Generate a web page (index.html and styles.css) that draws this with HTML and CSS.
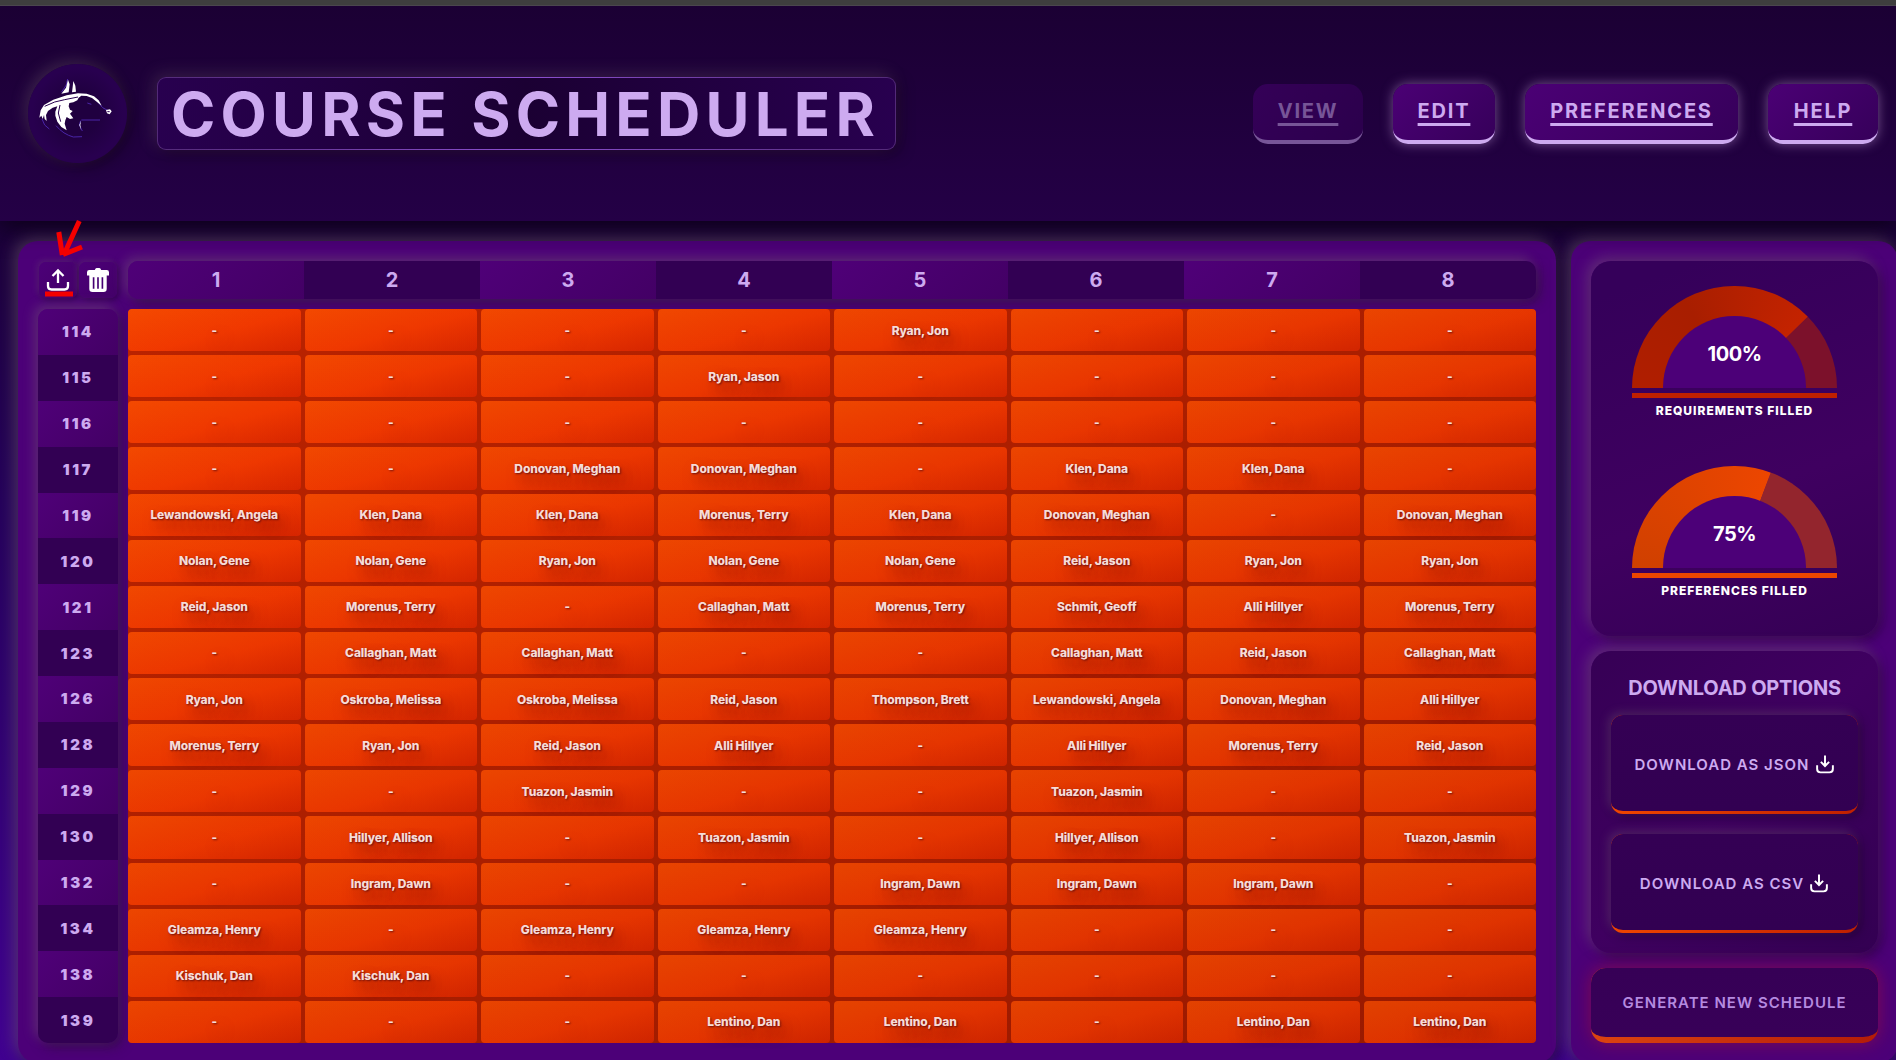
FILE: index.html
```html
<!DOCTYPE html>
<html lang="en">
<head>
<meta charset="utf-8">
<title>Course Scheduler</title>
<link rel="stylesheet" href="styles.css">
</head>
<body>
<header class="header">
  <div class="logo">
    <svg viewBox="24 41 297 297">
      <g fill="none" stroke="#4a25a8" stroke-width="3">
        <path d="M66 206L74 224L88 236"/><path d="M108 226Q130 252 160 260L186 259"/><path d="M182 211L178 224L187 242"/><path d="M184 209H240"/><path d="M234 156L248 172L266 182"/><path d="M143 86L139 104L124 126"/><path d="M202 158L214 162"/>
      </g>
      <g fill="#fff">
        <path d="M144 88L149 102L146 126L124 130L138 112Z"/><path d="M160 92L166 106L168 124L156 126L158 110Z"/>
        <path d="M62 180L72 164L100 148L140 135L174 129L200 130L222 138L236 150L245 166L232 156L216 143L200 137L184 136L176 142L172 150L160 156L148 158L146 168L150 178L158 182L150 190L160 204L150 206L140 200L136 210L134 220L140 240L124 230L112 214L106 196L106 184L112 168L98 172L84 182L78 194L80 212L74 206L72 194L68 206L64 196L58 202Z"/>
        <path d="M258 179L270 177L275 183L269 192L261 189Z"/><path d="M183 211L178 224L183 238L181 224Z"/>
      </g>
      <g fill="none" stroke="#28004f" stroke-width="3">
        <path d="M74 168Q104 152 134 148L174 140"/><path d="M120 164L115 188L122 214"/><path d="M262 184H269"/>
      </g>
    </svg>
  </div>
  <h1 class="title">COURSE SCHEDULER</h1>
  <nav class="nav">
    <a class="nav-link current">VIEW</a>
    <a class="nav-link edit">EDIT</a>
    <a class="nav-link preferences">PREFERENCES</a>
    <a class="nav-link">HELP</a>
  </nav>
</header>
<main class="main">
  <section class="panel schedule">
    <div class="tools">
      <button class="tool"><svg viewBox="0 0 24 24"><path d="M12 16V3.500M6.500 9L12 3.500 17.500 9M2 15v4q0 3.500 3.500 3.500h13q3.500 0 3.500-3.500v-4" fill="none" stroke="#fff" stroke-width="2.300"/></svg></button>
      <button class="tool trash"><svg viewBox="0 0 24 26"><path fill="#fff" d="M8.500 2q.8-2 2-2h3q1.200 0 2 2h6q2.500 0 2.500 2.500V8h-2.500v14.500q0 3.500-3.500 3.500H6q-3.500 0-3.500-3.500V8H0V4.500Q0 2 2.500 2z"/><path d="M7.200 10v12.500M12 10v12.500M16.800 10v12.500" stroke="#460073" stroke-width="1.800"/></svg></button>
    </div>
    <div class="periods"><span>1</span><span>2</span><span>3</span><span>4</span><span>5</span><span>6</span><span>7</span><span>8</span></div>
    <div class="rooms"><span>114</span><span>115</span><span>116</span><span>117</span><span>119</span><span>120</span><span>121</span><span>123</span><span>126</span><span>128</span><span>129</span><span>130</span><span>132</span><span>134</span><span>138</span><span>139</span></div>
    <div class="grid">
      <div>-</div><div>-</div><div>-</div><div>-</div><div>Ryan, Jon</div><div>-</div><div>-</div><div>-</div>
      <div>-</div><div>-</div><div>-</div><div>Ryan, Jason</div><div>-</div><div>-</div><div>-</div><div>-</div>
      <div>-</div><div>-</div><div>-</div><div>-</div><div>-</div><div>-</div><div>-</div><div>-</div>
      <div>-</div><div>-</div><div>Donovan, Meghan</div><div>Donovan, Meghan</div><div>-</div><div>Klen, Dana</div><div>Klen, Dana</div><div>-</div>
      <div>Lewandowski, Angela</div><div>Klen, Dana</div><div>Klen, Dana</div><div>Morenus, Terry</div><div>Klen, Dana</div><div>Donovan, Meghan</div><div>-</div><div>Donovan, Meghan</div>
      <div>Nolan, Gene</div><div>Nolan, Gene</div><div>Ryan, Jon</div><div>Nolan, Gene</div><div>Nolan, Gene</div><div>Reid, Jason</div><div>Ryan, Jon</div><div>Ryan, Jon</div>
      <div>Reid, Jason</div><div>Morenus, Terry</div><div>-</div><div>Callaghan, Matt</div><div>Morenus, Terry</div><div>Schmit, Geoff</div><div>Alli Hillyer</div><div>Morenus, Terry</div>
      <div>-</div><div>Callaghan, Matt</div><div>Callaghan, Matt</div><div>-</div><div>-</div><div>Callaghan, Matt</div><div>Reid, Jason</div><div>Callaghan, Matt</div>
      <div>Ryan, Jon</div><div>Oskroba, Melissa</div><div>Oskroba, Melissa</div><div>Reid, Jason</div><div>Thompson, Brett</div><div>Lewandowski, Angela</div><div>Donovan, Meghan</div><div>Alli Hillyer</div>
      <div>Morenus, Terry</div><div>Ryan, Jon</div><div>Reid, Jason</div><div>Alli Hillyer</div><div>-</div><div>Alli Hillyer</div><div>Morenus, Terry</div><div>Reid, Jason</div>
      <div>-</div><div>-</div><div>Tuazon, Jasmin</div><div>-</div><div>-</div><div>Tuazon, Jasmin</div><div>-</div><div>-</div>
      <div>-</div><div>Hillyer, Allison</div><div>-</div><div>Tuazon, Jasmin</div><div>-</div><div>Hillyer, Allison</div><div>-</div><div>Tuazon, Jasmin</div>
      <div>-</div><div>Ingram, Dawn</div><div>-</div><div>-</div><div>Ingram, Dawn</div><div>Ingram, Dawn</div><div>Ingram, Dawn</div><div>-</div>
      <div>Gleamza, Henry</div><div>-</div><div>Gleamza, Henry</div><div>Gleamza, Henry</div><div>Gleamza, Henry</div><div>-</div><div>-</div><div>-</div>
      <div>Kischuk, Dan</div><div>Kischuk, Dan</div><div>-</div><div>-</div><div>-</div><div>-</div><div>-</div><div>-</div>
      <div>-</div><div>-</div><div>-</div><div>Lentino, Dan</div><div>Lentino, Dan</div><div>-</div><div>Lentino, Dan</div><div>Lentino, Dan</div>
    </div>
  </section>
  <aside class="panel side">
    <div class="card gauges">
      <div class="gauge red"><div class="arc"><div class="hole">100%</div></div><div class="label">REQUIREMENTS FILLED</div></div>
      <div class="gauge orange"><div class="arc"><div class="hole">75%</div></div><div class="label">PREFERENCES FILLED</div></div>
    </div>
    <div class="card downloads">
      <h2>DOWNLOAD OPTIONS</h2>
      <button class="download"><span>DOWNLOAD AS JSON</span><svg viewBox="0 0 24 24"><path d="M12 0v13.500M6.500 8.500L12 14l5.500-5.500M1.500 13v5q0 4.500 4.500 4.500h12q4.500 0 4.500-4.500v-5" fill="none" stroke="#fff" stroke-width="2.600"/></svg></button>
      <button class="download"><span>DOWNLOAD AS CSV</span><svg viewBox="0 0 24 24"><path d="M12 0v13.500M6.500 8.500L12 14l5.500-5.500M1.500 13v5q0 4.500 4.500 4.500h12q4.500 0 4.500-4.500v-5" fill="none" stroke="#fff" stroke-width="2.600"/></svg></button>
    </div>
    <button class="generate">GENERATE NEW SCHEDULE</button>
  </aside>
</main>
<svg class="annotation" viewBox="0 0 60 90"><path d="M49.300 11L34 44.500M28.800 22l3.500 23M52 37L33 44.500" fill="none" stroke="#f50000" stroke-width="5"/><path d="M15 81.500h28v5H15z" fill="#f50000"/></svg>
</body>
</html>
```
FILE: styles.css
```css
* { box-sizing: border-box; }
html, body { height: 100%; margin: 0; overflow: hidden; }
body {
  font-family: Inter, "Liberation Sans", sans-serif;
  color: #cdaaf0;
  background: linear-gradient(180deg, #1b0038 220px, #24005a 500px, #400090 1060px);
}
button { font: inherit; color: inherit; border: 0; margin: 0; padding: 0; }
.header {
  position: relative;
  z-index: 1;
  height: 221px;
  padding: 6px 18px 0 28px;
  display: flex;
  align-items: center;
  background: linear-gradient(#3e3e3e 5px, #4a464e 5px, #4a464e 6px, transparent 6px), linear-gradient(180deg, #1b0033, #240046);
  box-shadow: 0 5px 22px #0c0018;
}
.logo {
  width: 99px;
  height: 99px;
  margin: 0 30px 0 0;
  border-radius: 50%;
  background: radial-gradient(#200040 30%, #28004f 65%);
  box-shadow: -4px -4px 14px rgba(140, 120, 130, .25), 4px 4px 14px rgba(15, 0, 20, .6);
}
.logo svg { display: block; width: 99px; height: 99px; }
.title {
  margin: 0;
  width: 739px;
  height: 73px;
  padding-left: 13px;
  border: 1px solid transparent;
  border-radius: 9px;
  font-size: 60px;
  line-height: 73px;
  font-weight: 700;
  letter-spacing: 5.2px;
  white-space: nowrap;
  background: linear-gradient(90deg, #28004f, #1b0033 50%, #28004f) padding-box, linear-gradient(90deg, #532a78, #8b4fd0 50%, #532a78) border-box;
  box-shadow: -4px -4px 16px rgba(140, 120, 130, .22), 4px 4px 14px rgba(15, 0, 20, .5);
}
.nav { margin-left: auto; display: flex; gap: 30px; }
.nav-link {
  width: 110px;
  height: 60px;
  border-radius: 15px;
  border-bottom: 4px solid #cdaaf0;
  font-size: 20px;
  line-height: 54px;
  font-weight: 650;
  letter-spacing: 1.8px;
  text-align: center;
  text-decoration: underline 3px;
  text-underline-offset: 5px;
  background: linear-gradient(135deg, #4b0075, #36005a);
  box-shadow: 0 0 12px rgba(190, 150, 210, .55);
}
.nav-link.edit { width: 102px; }
.nav-link.preferences { width: 213px; }
.nav-link.current { opacity: .5; box-shadow: none; }
.main {
  width: 1880px;
  height: 822px;
  margin: 20px 0 0 18px;
  display: flex;
  gap: 15px;
}
.panel {
  padding: 20px;
  border-radius: 20px;
  background: #4c0078;
  box-shadow: -4px -4px 16px rgba(140, 120, 130, .4), 4px 4px 16px rgba(20, 0, 30, .6);
}
.schedule {
  width: 1538px;
  display: grid;
  grid-template: 38px 734px / 80px 1408px;
  gap: 10px;
}
.tools { display: flex; gap: 2px; padding: 1px 0 1px 1px; }
.tool {
  width: 38px;
  display: flex;
  align-items: center;
  justify-content: center;
  border-radius: 7px;
  background: linear-gradient(135deg, #4c0078, #430068);
  box-shadow: -2px -2px 6px rgba(140, 120, 130, .2), 2px 2px 6px rgba(20, 0, 30, .45);
}
.tool svg { width: 24px; height: 24px; margin-bottom: 2px; }
.trash svg { width: 22px; margin-bottom: 1px; }
.periods, .rooms {
  display: flex;
  border-radius: 10px;
  box-shadow: -4px -4px 12px rgba(140, 120, 130, .32), 4px 4px 12px rgba(40, 20, 50, .6);
}
.rooms { flex-direction: column; }
.periods span, .rooms span {
  flex: 1;
  display: flex;
  align-items: center;
  justify-content: center;
  background: linear-gradient(135deg, #4f0078, #430065);
}
.periods span:nth-child(even), .rooms span:nth-child(even) { background: #320053; }
.periods span { font-size: 20px; font-weight: 700; }
.rooms span { font-size: 15px; font-weight: 900; letter-spacing: 2.6px; }
.periods span:first-child { border-radius: 10px 0 0 10px; }
.periods span:last-child { border-radius: 0 10px 10px 0; }
.rooms span:first-child { border-radius: 10px 10px 0 0; }
.rooms span:last-child { border-radius: 0 0 10px 10px; }
.grid {
  display: grid;
  grid-template: repeat(16, 1fr) / repeat(8, 1fr);
  gap: 4px;
  border-radius: 5px;
  background: linear-gradient(150deg, #bb2300, #981900);
}
.grid div {
  display: flex;
  align-items: center;
  justify-content: center;
  border-radius: 4px;
  font-size: 12px;
  font-weight: 800;
  letter-spacing: -.13px;
  color: #f6dcd8;
  text-shadow: 1px 1px 2px rgba(60, 0, 20, .7), 6px 8px 14px rgba(100, 0, 0, .55);
  background:
    linear-gradient(150deg, rgba(120, 20, 0, 0) 15%, rgba(120, 20, 0, .2)) fixed,
    linear-gradient(165deg, #f54a00, #f23900 55%, #da2600);
}
.side { width: 327px; display: flex; flex-direction: column; gap: 15px; }
.card {
  border-radius: 20px;
  box-shadow: -4px -4px 14px rgba(140, 120, 130, .35), 4px 4px 12px rgba(25, 0, 35, .5);
}
.gauges {
  height: 375px;
  padding-top: 25px;
  display: flex;
  flex-direction: column;
  align-items: center;
  background: linear-gradient(160deg, #35005a, #35005a 8%, #3f0060 60%, #350055);
}
.gauge { flex: none; width: 205px; height: 180px; }
.arc {
  height: 102px;
  display: flex;
  align-items: flex-end;
  justify-content: center;
  border-radius: 103px 103px 0 0;
}
.red .arc { background: conic-gradient(from -90deg at 50% 100%, #b01e00, #a81e00 60deg, #c42300 135.500deg, #7c112b 136deg 180deg, #7c112b); }
.orange .arc { background: conic-gradient(from -90deg at 50% 100%, #d04000, #ec4600 110.500deg, #93252d 111deg 180deg, #93252d); }
.hole {
  width: 143px;
  height: 72px;
  padding-top: 26px;
  border-radius: 72px 72px 0 0;
  font-size: 20px;
  line-height: 24px;
  font-weight: 700;
  letter-spacing: -.5px;
  text-align: center;
  color: #fff;
  background: #4c0078;
}
.label {
  margin-top: 5px;
  border-top: 5px solid #c02000;
  padding-top: 5px;
  font-size: 12px;
  line-height: 16px;
  font-weight: 800;
  letter-spacing: 1px;
  text-align: center;
  color: #fff;
}
.orange .label { border-color: #ec4600; }
.downloads {
  height: 302px;
  padding: 20px;
  display: flex;
  flex-direction: column;
  gap: 20px;
  background: linear-gradient(135deg, #360055, #3f0060 50%, #330052);
}
.downloads h2 { margin: 5px 0 -5px; font-size: 20px; line-height: 24px; font-weight: 650; letter-spacing: -.2px; text-align: center; }
.download {
  height: 99px;
  flex: none;
  display: flex;
  align-items: center;
  justify-content: center;
  gap: 6px;
  padding: 2px 1px 0 0;
  border: solid transparent;
  border-width: 0 0 3px;
  border-radius: 12px;
  font-size: 15px;
  font-weight: 600;
  letter-spacing: 1px;
  background: linear-gradient(#340054, #320052) padding-box, linear-gradient(90deg, #f04600, #c02000) border-box;
  box-shadow: -3px -3px 10px rgba(140, 120, 130, .25), 3px 3px 10px rgba(25, 0, 35, .5);
}
.download svg { width: 18px; height: 19px; }
.generate {
  height: 75px;
  flex: none;
  border: solid transparent;
  border-width: 0 0 6px;
  border-radius: 15px;
  font-size: 15px;
  font-weight: 600;
  letter-spacing: 1px;
  color: #b58ae0;
  background: linear-gradient(#360056, #380058) padding-box, linear-gradient(90deg, #dc4410, #b41c08) border-box;
  box-shadow: 0 0 18px rgba(180, 20, 40, .5);
}
.annotation { position: absolute; z-index: 2; left: 30px; top: 210px; width: 60px; height: 90px; }
```
